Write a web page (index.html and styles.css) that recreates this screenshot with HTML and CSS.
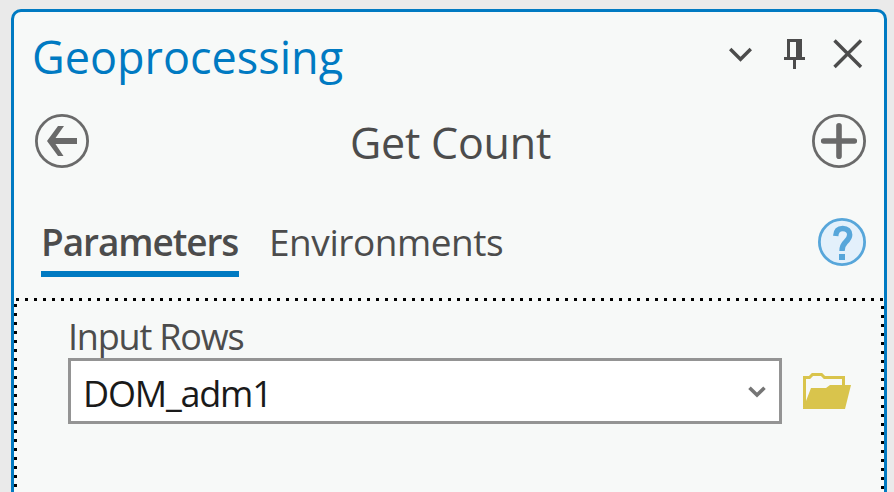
FILE: index.html
```html
<!DOCTYPE html>
<html lang="en">
<head>
<meta charset="utf-8">
<title>Geoprocessing</title>
<link rel="stylesheet" href="styles.css">
</head>
<body>
<main class="pane">
  <header class="titlebar">
    <h1 class="title">Geoprocessing</h1>
    <div class="controls">
      <svg class="chevron" width="24" height="16" viewBox="0 0 24 16"><path d="M1.200 2 11.500 12.300 21.800 2" fill="none" stroke="#4c4c4c" stroke-width="3.400"/></svg>
      <svg class="pin" width="21" height="30" viewBox="0 0 21 30"><path fill="#4c4c4c" fill-rule="evenodd" d="M3 0h15v18h3v3h-9v9H9v-9H0v-3h3zM6 3v15h6V3z"/></svg>
      <svg class="close" width="30" height="30" viewBox="0 0 30 30"><path d="M1.500 1.500 28 28M28 1.500 1.500 28" stroke="#4c4c4c" stroke-width="3.400" fill="none"/></svg>
    </div>
  </header>
  <section class="tool">
    <svg width="54" height="54" viewBox="0 0 54 54"><circle cx="27" cy="27" r="25.600" fill="none" stroke="#6a6a6a" stroke-width="2.800"/><path fill="#6a6a6a" d="M12 27 23 12h6l-8.500 12H42v6H20.500L28.500 42H23z"/></svg>
    <h2 class="tool-name">Get Count</h2>
    <svg width="54" height="54" viewBox="0 0 54 54"><circle cx="27" cy="27" r="25.600" fill="none" stroke="#6a6a6a" stroke-width="2.800"/><path d="M27 11.700v30.600M11.700 27h30.600" stroke="#6a6a6a" stroke-width="5.600" stroke-linecap="round"/></svg>
  </section>
  <nav class="tabs">
    <span class="tab tab-active">Parameters</span>
    <span class="tab tab-other">Environments</span>
    <svg class="help" width="48" height="48" viewBox="0 0 48 48"><circle cx="24" cy="24" r="22.600" fill="#e3f0fb" stroke="#57a6da" stroke-width="2.800"/><path d="M17.700 18C18 12.500 20.500 10.500 24.700 10.500c4.600 0 7 2.600 7 6.300 0 3.200-1.600 5-4 7.200-2.500 2.300-3.700 4-3.700 9" fill="none" stroke="#57a6da" stroke-width="5.400"/><path d="M21 36h6v6h-6z" fill="#57a6da"/></svg>
  </nav>
  <section class="params">
    <label class="label">Input Rows</label>
    <div class="row">
      <div class="combo"><span class="value">DOM_adm1</span>
        <svg class="arrow" width="18" height="12" viewBox="0 0 18 12"><path d="M1.500 1.800 9 9 16.500 1.800" fill="none" stroke="#757575" stroke-width="3.600"/></svg>
      </div>
      <svg class="folder" width="48" height="36" viewBox="0 0 48 36"><path d="M1.500 34V4.500h5L9.500 1.500h9l3 3h19V14" fill="none" stroke="#d9c44c" stroke-width="3"/><path fill="#d9c44c" d="M0 36V34.500L3 28 8 15h15l4-3h21l-6 24z"/></svg>
    </div>
  </section>
</main>
</body>
</html>
```

FILE: styles.css
```css
* { box-sizing: border-box; }
body {
  margin: 0;
  height: 492px;
  padding: 9px 7px 0 11px;
  overflow: hidden;
  background: #eaeaea;
  color: #4c4c4c;
  font-family: "Open Sans", "Segoe UI", sans-serif;
}
svg { display: block; flex: none; }
h1, h2 { margin: 0; font-weight: 400; }
.pane {
  height: 483px;
  border: 3px solid #007ac2;
  border-bottom: 0;
  border-radius: 10px 10px 0 0;
  background: #f7f9f8;
}
.titlebar {
  display: flex;
  justify-content: space-between;
  height: 90px;
  padding: 14px 21px 0 18px;
}
.title {
  color: #007ac2;
  font-size: 45px;
  line-height: 61px;
  white-space: nowrap;
}
.controls { display: flex; padding-top: 13px; }
.chevron { margin: 8px 31px 0 0; }
.pin { margin-right: 28px; }
.tool {
  display: flex;
  justify-content: space-between;
  height: 54px;
  margin: 12px 18px 0 21px;
}
.tool-name {
  font-size: 43px;
  line-height: 57px;
  letter-spacing: -0.2px;
  white-space: nowrap;
}
.tabs {
  display: flex;
  height: 80px;
  margin-top: 50px;
  padding: 0 18px 0 27px;
  font-size: 37px;
}
.tab { height: 59px; line-height: 47px; white-space: nowrap; }
.tab-active {
  width: 198px;
  border-bottom: 6px solid #007ac2;
  font-weight: 600;
  letter-spacing: -1.1px;
}
.tab-other { margin-left: 30px; letter-spacing: -0.45px; }
.help { margin-left: auto; }
.params {
  height: 194px;
  padding: 17px 0 0 54px;
  background:
    repeating-linear-gradient(90deg, #000 0 3px, transparent 3px 9px) 1.500px 0 / 868px 3px no-repeat,
    repeating-linear-gradient(180deg, #000 0 3px, transparent 3px 9px) 0 5.500px / 3px 100% no-repeat,
    repeating-linear-gradient(180deg, #000 0 3px, transparent 3px 9px) 100% 7.500px / 3px 100% no-repeat;
}
.label {
  display: block;
  height: 43px;
  font-size: 36px;
  line-height: 43px;
  letter-spacing: -1.2px;
}
.row { display: flex; }
.combo {
  display: flex;
  align-items: center;
  justify-content: space-between;
  width: 714px;
  height: 66px;
  padding: 0 13px 0 12px;
  border: 3px solid #949494;
  background: #fff;
}
.value {
  padding-top: 5px;
  color: #1a1a1a;
  font-size: 36px;
  line-height: 55px;
  letter-spacing: -1.2px;
}
.arrow { margin-top: 2px; }
.folder { margin: 15px 0 0 21px; }
```
